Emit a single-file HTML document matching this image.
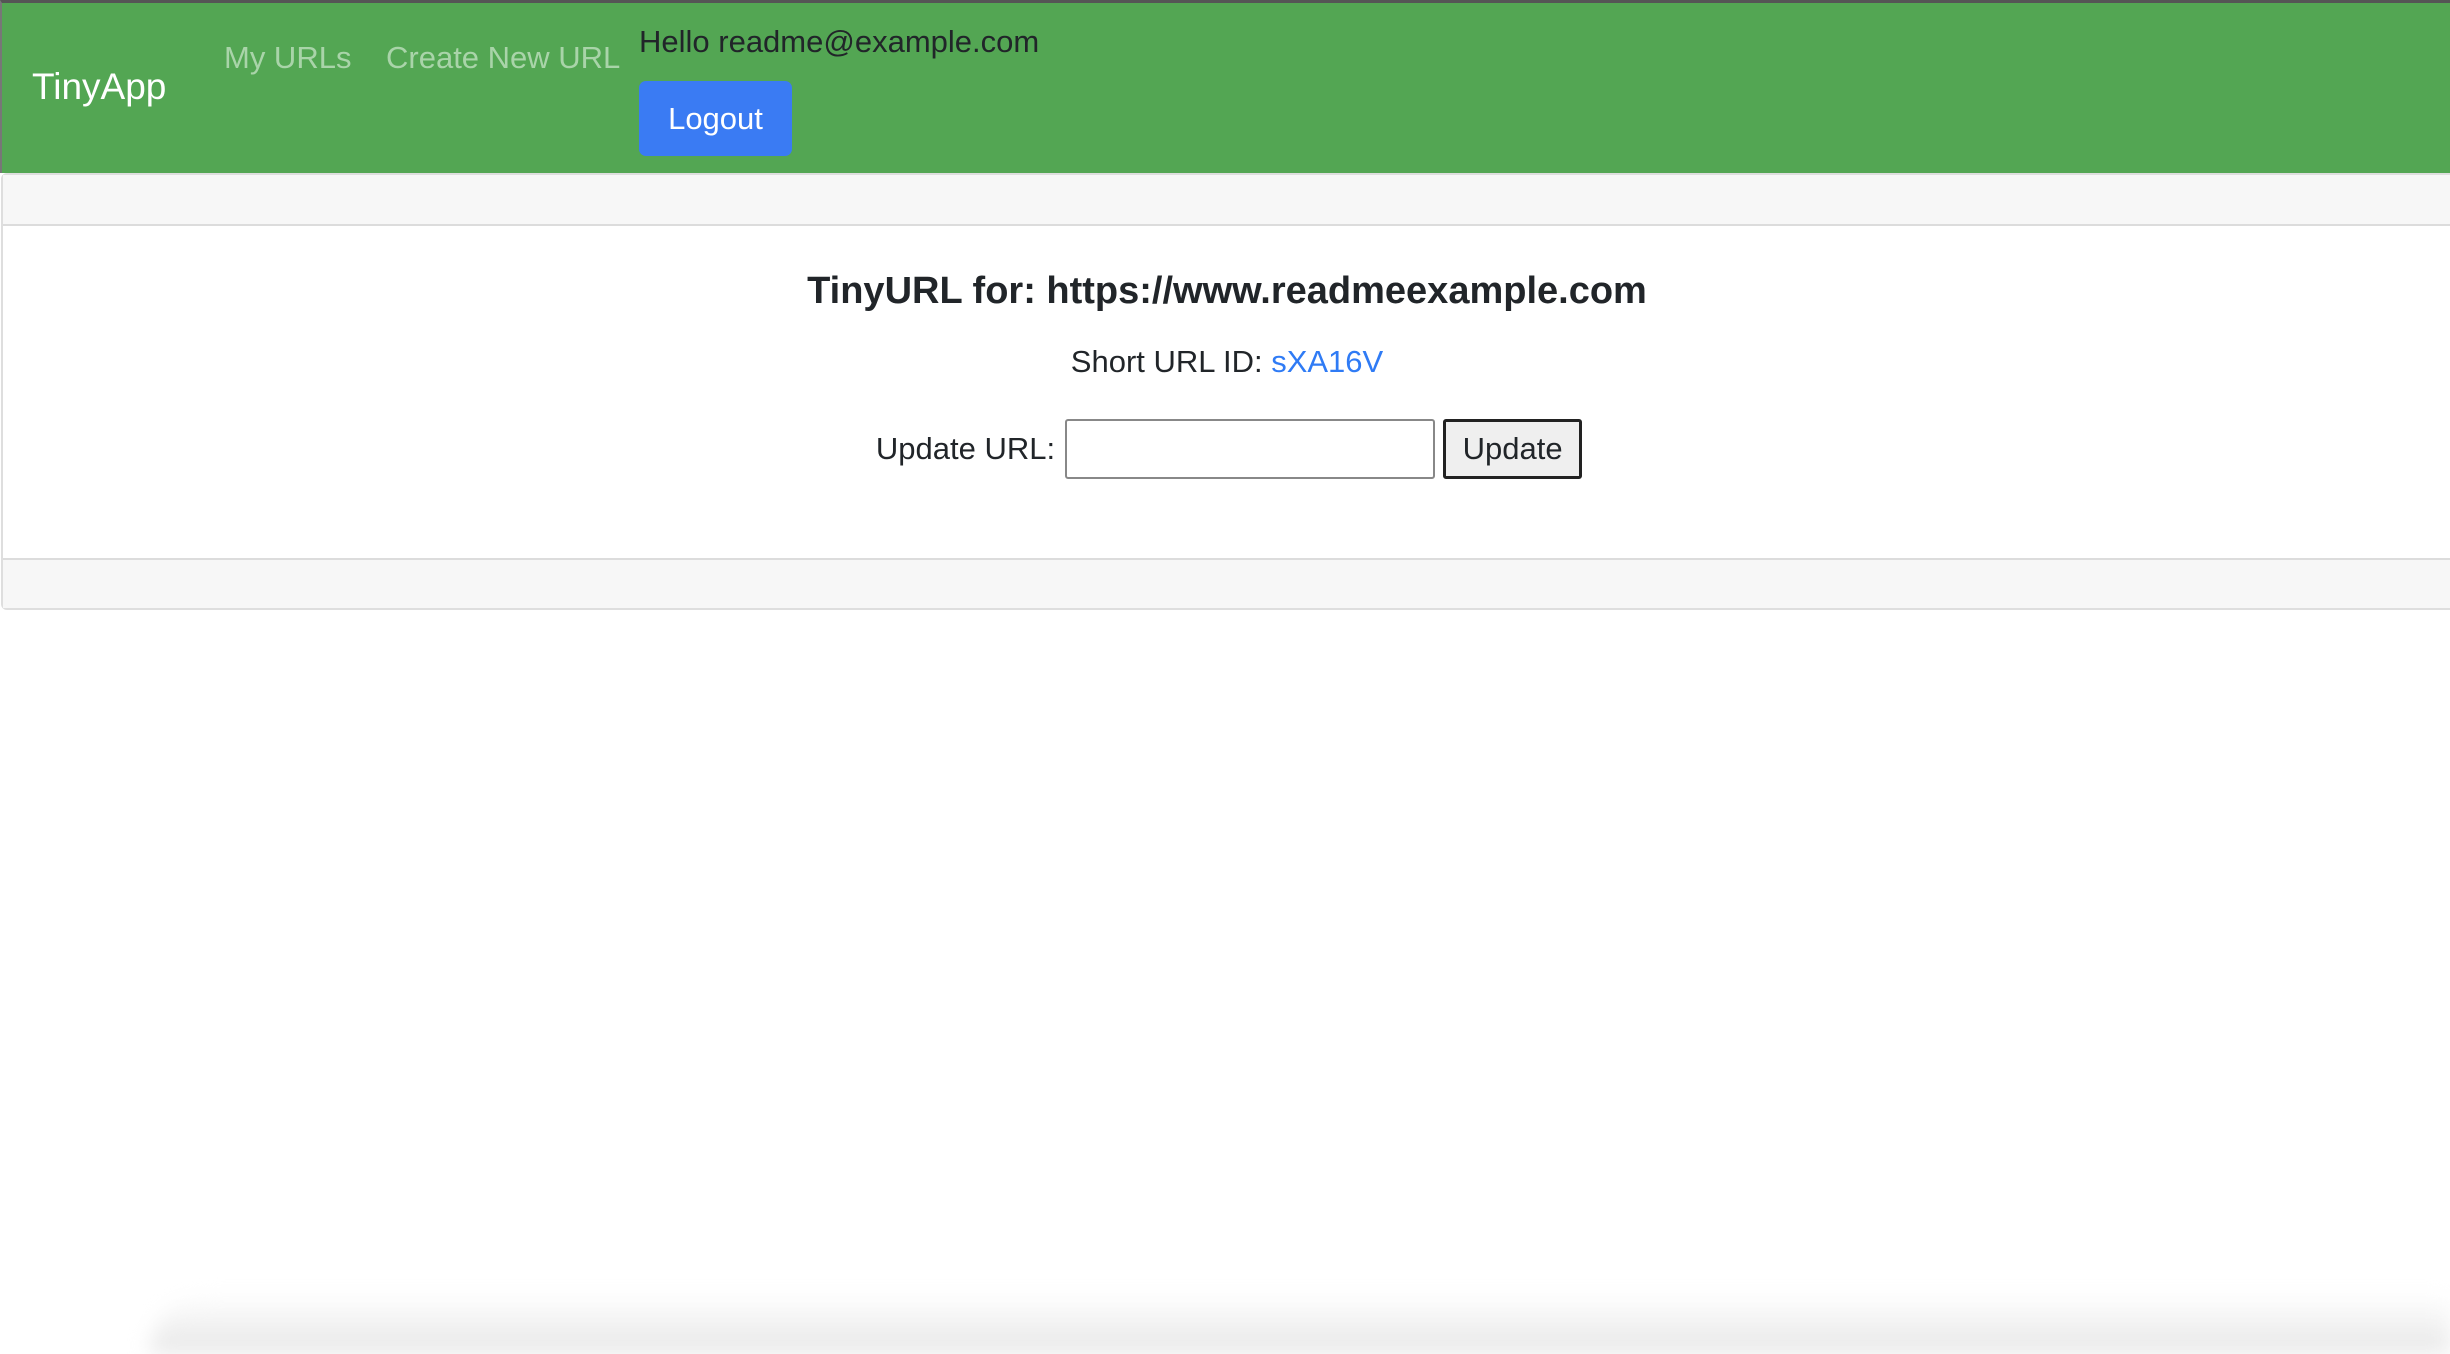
<!DOCTYPE html>
<html><head><meta charset="utf-8"><style>
*{box-sizing:border-box;margin:0;padding:0}
body{width:2450px;height:1354px;overflow:hidden;background:#fff;font-family:"Liberation Sans",sans-serif;color:#212529;position:relative}
.nav{position:absolute;left:0;top:0;width:2450px;height:173px;background:#53a653;border-top:3px solid #555;border-left:2px solid #777}
.brand{position:absolute;left:30px;top:63px;font-size:37px;color:#fff}
.link{position:absolute;top:37px;font-size:31px;color:#a9d4a9}
.hello{position:absolute;left:637px;top:21px;font-size:31px;color:#212529}
.btn{position:absolute;left:637px;top:78px;width:153px;height:75px;background:#3a7bf3;border-radius:7px;color:#fff;font-size:31px;line-height:75px;text-align:center}
.card{position:absolute;left:1px;top:173px;width:2460px;height:437px;border:2px solid #dedede;border-radius:6px}
.hd{position:absolute;left:0;top:0;right:0;height:51px;background:#f7f7f7;border-bottom:2px solid #dcdcdc}
.ft{position:absolute;left:0;bottom:0;right:0;height:50px;background:#f7f7f7;border-top:2px solid #dcdcdc}
.c{position:absolute;left:0;width:2450px;text-align:center}
h1{font-size:38px;font-weight:600}
.inp{display:inline-block;vertical-align:middle;width:370px;height:60px;border:2px solid #888;border-radius:3px;margin:0 8px 0 10px}
.ub{display:inline-block;vertical-align:middle;height:60px;width:139px;border:3px solid #222;border-radius:3px;background:#efefef;font-size:31px;line-height:54px;text-align:center}
.shadow{position:absolute;left:150px;right:0;bottom:0;height:60px;background:linear-gradient(#fff,#e6e6e6);border-top-left-radius:60px;filter:blur(10px)}
</style></head><body>
<div class="nav">
<div class="brand">TinyApp</div>
<div class="link" style="left:222px">My URLs</div>
<div class="link" style="left:384px">Create New URL</div>
<div class="hello">Hello readme@example.com</div>
<div class="btn">Logout</div>
</div>
<div class="card"><div class="hd"></div><div class="ft"></div></div>
<div class="c" style="top:270px"><h1 style="padding-left:4px">TinyURL for: https://www.readmeexample.com</h1></div>
<div class="c" style="top:344px;font-size:31px;padding-left:4px">Short URL ID: <span style="color:#2f7bf5">sXA16V</span></div>
<div class="c" style="top:417px;font-size:31px;line-height:60px;padding-left:8px"><span style="vertical-align:middle">Update URL:</span><span class="inp"></span><span class="ub">Update</span></div>
<div class="shadow"></div>
</body></html>
